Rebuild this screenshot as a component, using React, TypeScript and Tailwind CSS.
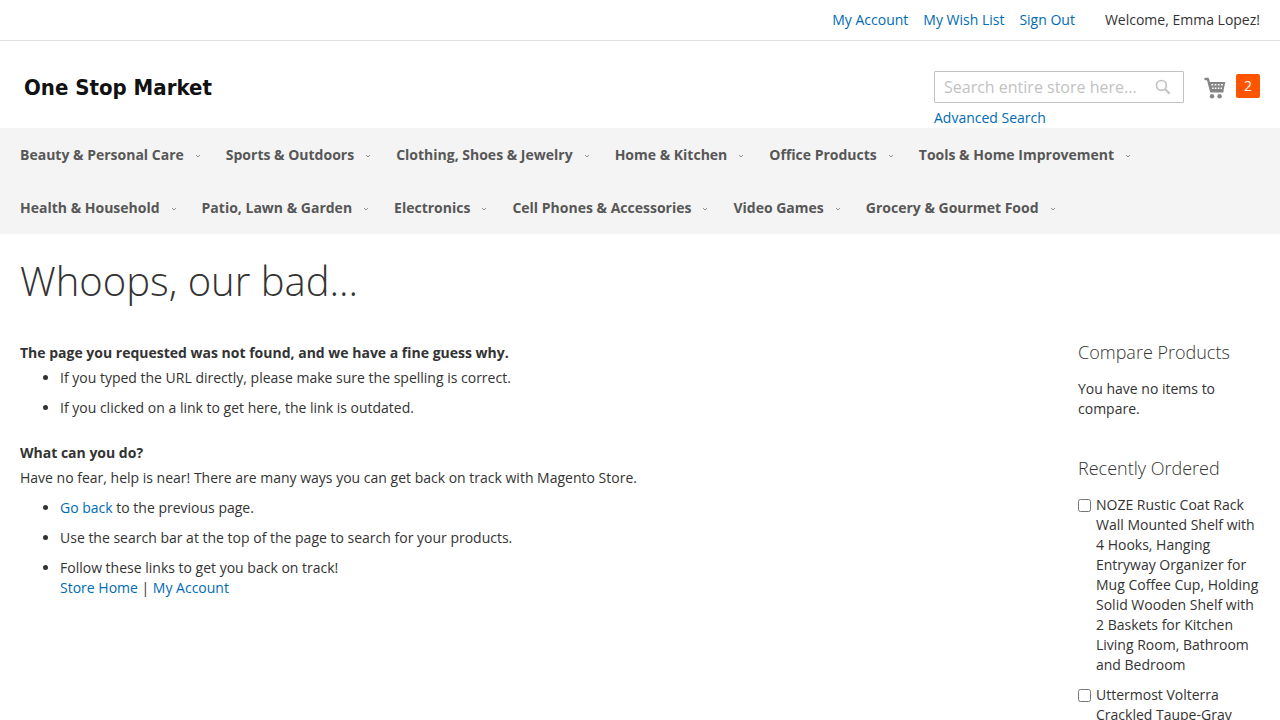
import React from 'react';

const navItems = [
  'Beauty & Personal Care',
  'Sports & Outdoors',
  'Clothing, Shoes & Jewelry',
  'Home & Kitchen',
  'Office Products',
  'Tools & Home Improvement',
  'Health & Household',
  'Patio, Lawn & Garden',
  'Electronics',
  'Cell Phones & Accessories',
  'Video Games',
  'Grocery & Gourmet Food',
];

const recentItems = [
  'NOZE Rustic Coat Rack Wall Mounted Shelf with 4 Hooks, Hanging Entryway Organizer for Mug Coffee Cup, Holding Solid Wooden Shelf with 2 Baskets for Kitchen Living Room, Bathroom and Bedroom',
  'Uttermost Volterra Crackled Taupe-Gray',
];

function Link({ children }: { children: React.ReactNode }) {
  return (
    <a href="#" className="text-[#006bb4] hover:underline">
      {children}
    </a>
  );
}

function CartIcon() {
  return (
    <svg width="22" height="22" viewBox="0 0 22 22" fill="none" aria-hidden="true">
      <path d="M1.5 2H3.9L7.2 14.4H18.4" stroke="#858585" strokeWidth="2.4" strokeLinecap="round" strokeLinejoin="round" />
      <path fill="#858585" d="M4.5 5h16.8l-1.9 9H6.6z" />
      <path
        fill="#fff"
        d="M7.4 7.1h1.8v1.5H7.4zM10.6 7.1h1.8v1.5h-1.8zM13.8 7.1h1.8v1.5h-1.8zM17 7.1h1.8v1.5H17zM8.1 10.4h1.6v1.5H8.1zM10.8 10.4h1.6v1.5h-1.6zM13.7 10.4h1.6v1.5h-1.6zM16.5 10.4H18v1.5h-1.5z"
      />
      <circle cx="8" cy="19.2" r="2.2" fill="#858585" />
      <circle cx="15.6" cy="19.2" r="2.2" fill="#858585" />
    </svg>
  );
}

export default function App() {
  return (
    <div className="min-h-screen bg-white font-['Open_Sans',sans-serif] text-sm leading-5 text-[#333]">
      <header>
        <div className="flex h-[41px] items-center justify-end border-b border-[#e0e0e0] px-5">
          <nav aria-label="Account" className="flex gap-[15px]">
            <Link>My Account</Link>
            <Link>My Wish List</Link>
            <Link>Sign Out</Link>
          </nav>
          <span className="ml-[30px]">Welcome, Emma Lopez!</span>
        </div>
        <div className="flex items-start justify-between px-5 pt-[30px]">
          <a
            href="#"
            className="pt-px pl-1 font-['DejaVu_Sans_Condensed','DejaVu_Sans',sans-serif] text-[22px] leading-8 font-bold text-[#111]"
          >
            One Stop Market
          </a>
          <div className="flex items-start">
            <div className="w-[250px]">
              <form className="relative">
                <input
                  type="text"
                  aria-label="Search"
                  placeholder="Search entire store here..."
                  className="block h-8 w-full rounded-[1px] border border-[#c2c2c2] pr-9 pl-[9px] text-base placeholder:text-[#c2c2c2]"
                />
                <button type="button" aria-label="Search" className="absolute top-2 right-[13px]">
                  <svg width="16" height="16" viewBox="0 0 16 16" fill="none" stroke="#c2c2c2" strokeWidth="1.7" aria-hidden="true">
                    <circle cx="6.4" cy="6.4" r="4.9" />
                    <path d="M10 10l4.7 4.7" strokeWidth="2" />
                  </svg>
                </button>
              </form>
              <div className="pt-[5px]">
                <Link>Advanced Search</Link>
              </div>
            </div>
            <a href="#" aria-label="Shopping cart" className="mt-[3px] ml-5 flex items-start gap-2.5">
              <span className="pt-[3px]">
                <CartIcon />
              </span>
              <span className="h-6 w-6 rounded-xs bg-[#ff5501] text-center leading-6 text-white">2</span>
            </a>
          </div>
        </div>
        <nav aria-label="Categories" className="bg-[#f4f4f4] px-5">
          <ul className="flex flex-wrap gap-x-[25px]">
            {navItems.map((name) => (
              <li key={name}>
                <a href="#" className="flex items-center font-bold leading-[53px] text-[#575757]">
                  {name}
                  <svg className="mt-0.5 ml-[11px]" width="6" height="6" viewBox="0 0 6 6" fill="none" stroke="#777" strokeWidth="0.8" aria-hidden="true">
                    <path d="M1 2l2 2 2-2" />
                  </svg>
                </a>
              </li>
            ))}
          </ul>
        </nav>
      </header>

      <main className="px-5">
        <h1 className="pt-[25px] text-[40px] leading-[44px] font-light">Whoops, our bad...</h1>
        <div className="flex items-start justify-between gap-10 pt-10">
          <div>
            <h2 className="font-bold">The page you requested was not found, and we have a fine guess why.</h2>
            <ul className="mt-[5px] list-disc space-y-2.5 pl-10">
              <li>If you typed the URL directly, please make sure the spelling is correct.</li>
              <li>If you clicked on a link to get here, the link is outdated.</li>
            </ul>
            <h2 className="mt-[25px] font-bold">What can you do?</h2>
            <p className="mt-[5px]">
              Have no fear, help is near! There are many ways you can get back on track with Magento Store.
            </p>
            <ul className="mt-2.5 list-disc space-y-2.5 pl-10">
              <li>
                <Link>Go back</Link> to the previous page.
              </li>
              <li>Use the search bar at the top of the page to search for your products.</li>
              <li>
                Follow these links to get you back on track!
                <br />
                <Link>Store Home</Link> | <Link>My Account</Link>
              </li>
            </ul>
          </div>
          <aside className="w-[182px] shrink-0">
            <section>
              <h2 className="text-lg leading-[18px] font-light">Compare Products</h2>
              <p className="mt-[18px]">You have no items to compare.</p>
            </section>
            <section className="mt-10">
              <h2 className="text-lg leading-[18px] font-light">Recently Ordered</h2>
              <ul className="mt-[18px] space-y-2.5">
                {recentItems.map((item, i) => (
                  <li key={item} className="flex items-start gap-[5px]">
                    <input id={`recent-${i}`} type="checkbox" className="mt-1 h-[13px] w-[13px] shrink-0" />
                    <label htmlFor={`recent-${i}`}>{item}</label>
                  </li>
                ))}
              </ul>
            </section>
          </aside>
        </div>
      </main>
    </div>
  );
}
